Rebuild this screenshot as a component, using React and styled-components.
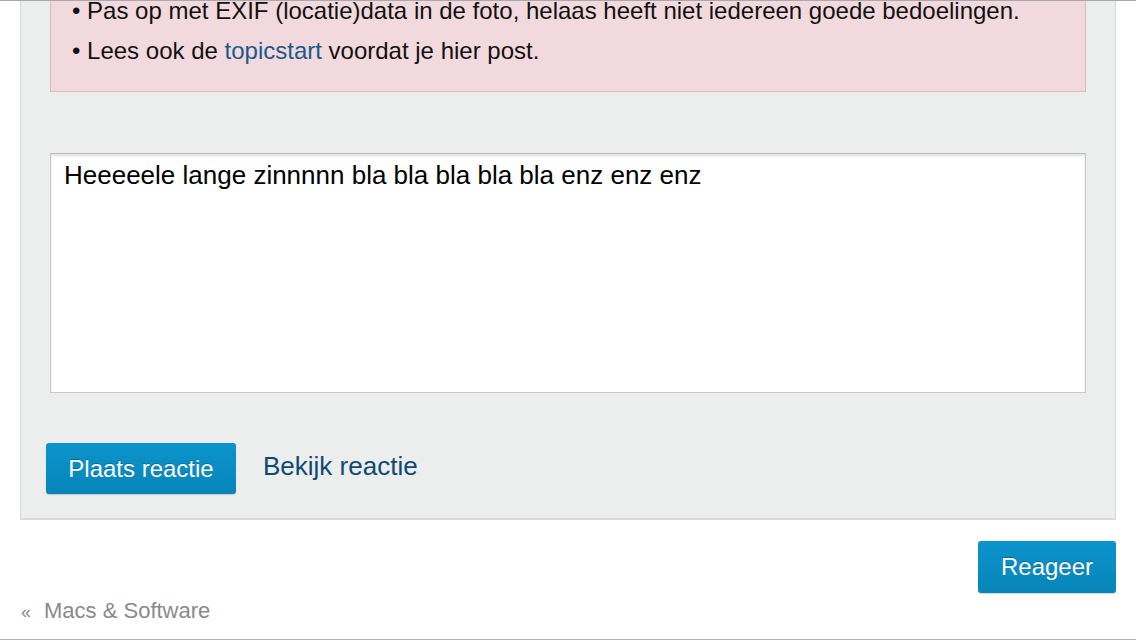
import React from 'react';
import styled, { createGlobalStyle } from 'styled-components';

const GlobalStyle = createGlobalStyle`
    html, body {
        margin: 0;
        padding: 0;
        background: #ffffff;
    }

    body {
        font-family: "Liberation Sans", Arial, Helvetica, sans-serif;
        font-size: 24px;
        color: #111;
    }
`;

const Page = styled.div`
    width: 1136px;
    height: 640px;
    box-sizing: border-box;
    overflow: hidden;
    border-top: 1px solid #a9a9a9;
    border-bottom: 1px solid #b3b3b3;
`;

const Panel = styled.div`
    margin: -41px 20px 0 20px;
    padding: 0 29px 24px 29px;
    background: #eceded;
    border: 1px solid #d9dada;
    border-bottom-width: 2px;
    border-top: none;
`;

const Notice = styled.div`
    background: #f2d9dd;
    border: 1px solid #dcbbc1;
    padding: 36px 21px 26px 21px;
`;

const Bullet = styled.p`
    margin: 0;
    line-height: 28px;
    font-size: 24px;

    & + & {
        margin-top: 12px;
    }
`;

const Link = styled.a`
    color: ${(p) => p.$tone || '#1b5a86'};
    font-size: ${(p) => p.$size || 24}px;
    text-decoration: none;
    cursor: pointer;
`;

const Editor = styled.textarea`
    display: block;
    width: 100%;
    height: 240px;
    box-sizing: border-box;
    margin: 61px 0 0 0;
    padding: 6px 13px;
    border: 1px solid #c6c7c7;
    border-top-color: #b9baba;
    box-shadow: inset 0 2px 3px rgba(0, 0, 0, 0.12);
    background: #fff;
    font-family: "Liberation Sans", Arial, Helvetica, sans-serif;
    font-size: 26px;
    line-height: 30px;
    color: #000;
    resize: none;
    outline: none;
`;

const Actions = styled.div`
    display: flex;
    align-items: center;
    gap: 27px;
    margin: 50px 0 0 -4px;

    & > a {
        line-height: 30px;
        margin-bottom: 6px;
    }
`;

const Button = styled.button`
    height: ${(p) => p.$h || 51}px;
    width: ${(p) => p.$w}px;
    padding: 0;
    border: none;
    border-radius: 3px;
    background: linear-gradient(#0b94cc, #0785b9);
    box-shadow: 0 1px 1px rgba(0, 0, 0, 0.18);
    color: #fff;
    font-family: "Liberation Sans", Arial, Helvetica, sans-serif;
    font-size: 24px;
    text-shadow: 0 -1px 0 rgba(0, 0, 0, 0.25);
    cursor: pointer;
`;

const Footer = styled.div`
    display: flex;
    justify-content: flex-end;
    margin: 21px 20px 0 20px;
`;

const Crumb = styled.div`
    margin-top: 5px;
    padding-left: 21px;
    line-height: 26px;
    font-size: 22px;
    color: #8a8a8a;
`;

const Quote = styled.span`
    font-size: 18px;
    margin-right: 13px;
`;

export default function App() {
    return (
        <>
            <GlobalStyle />
            <Page>
                <Panel>
                    <Notice>
                        <Bullet>• Pas op met EXIF (locatie)data in de foto, helaas heeft niet iedereen goede bedoelingen.</Bullet>
                        <Bullet>• Lees ook de <Link>topicstart</Link> voordat je hier post.</Bullet>
                    </Notice>

                    <Editor defaultValue="Heeeeele lange zinnnnn bla bla bla bla bla enz enz enz" />

                    <Actions>
                        <Button $w={190}>Plaats reactie</Button>
                        <Link $tone="#0c4a74" $size={26}>Bekijk reactie</Link>
                    </Actions>
                </Panel>

                <Footer>
                    <Button $w={138} $h={52}>Reageer</Button>
                </Footer>

                <Crumb><Quote>«</Quote>Macs &amp; Software</Crumb>
            </Page>
        </>
    );
}
